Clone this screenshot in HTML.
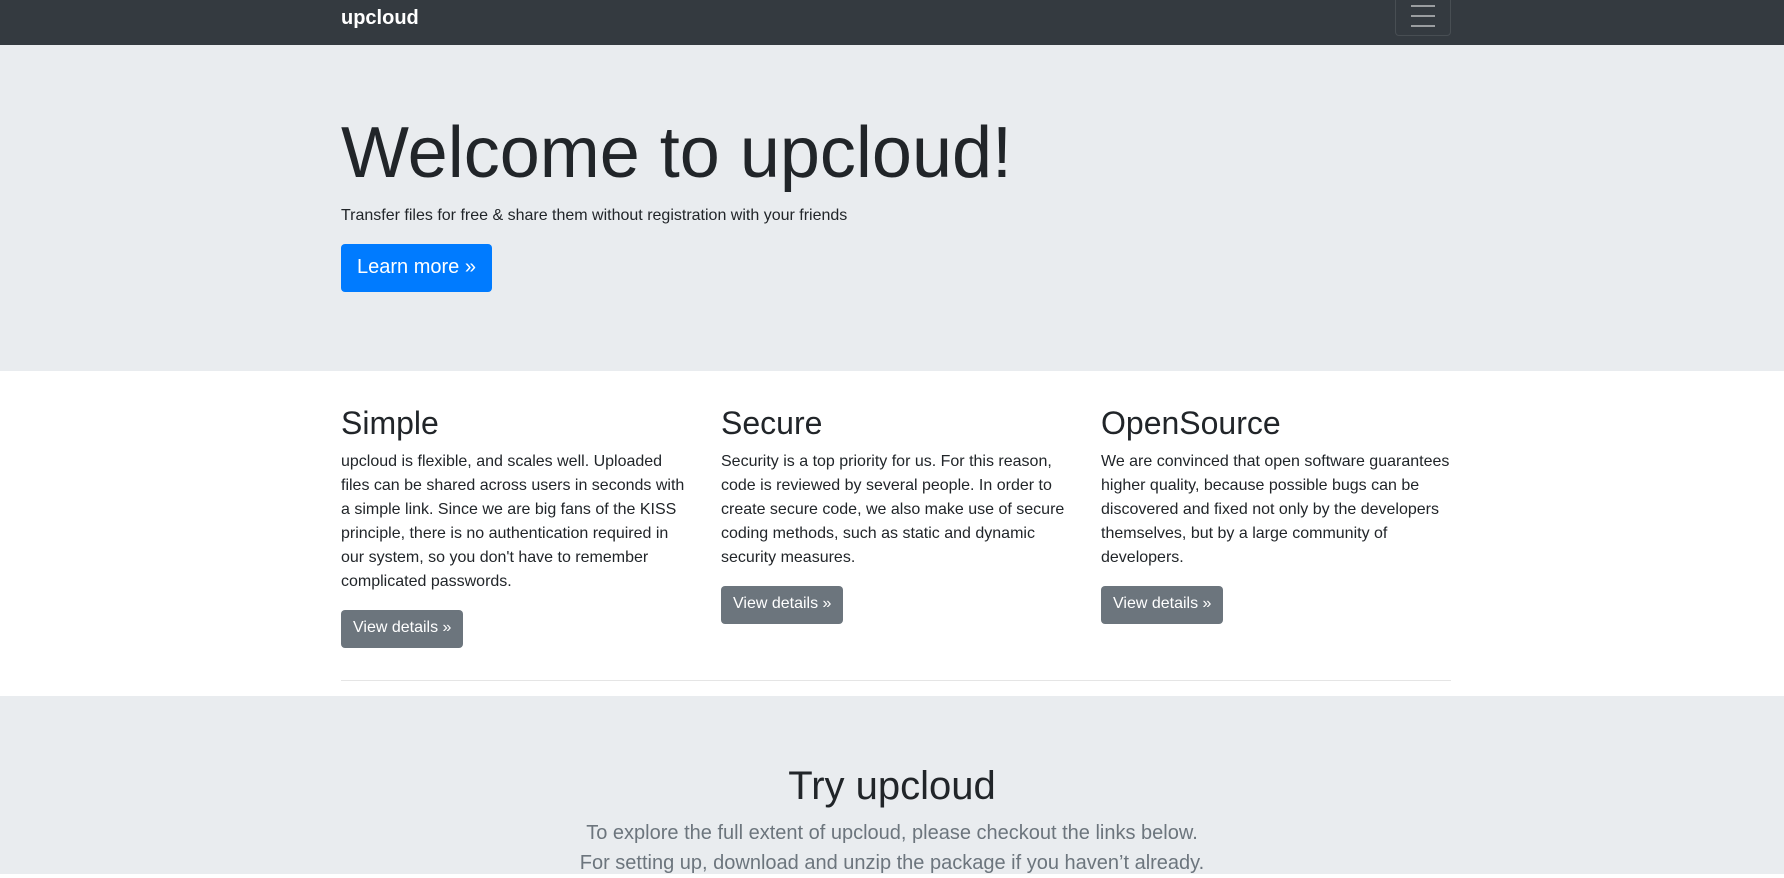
<!DOCTYPE html>
<html><head><meta charset="utf-8"><style>
*{box-sizing:border-box;margin:0;padding:0}
body{width:1784px;height:874px;overflow:hidden;font-family:"Liberation Sans",Arial,sans-serif;color:#212529;font-size:16px;line-height:1.5;background:#fff}
.nav{height:45px;background:#343a40;position:relative}
.c{width:1110px;margin-left:341px;position:relative}
.brand{position:absolute;left:0;top:5px;color:#fff;font-weight:bold;font-size:20px;line-height:26px}
.tog{position:absolute;right:0;top:-4px;width:56px;height:40px;border:1px solid rgba(255,255,255,.1);border-radius:4px}
.tog i{position:absolute;left:15px;width:24px;height:2px;background:rgba(255,255,255,.5)}
.jumbo{background:#e9ecef;height:326px;padding-top:65px}
h1{font-size:72px;font-weight:300;line-height:86px;margin-bottom:8px}
.jumbo p{margin-bottom:16px}
.btnp{display:inline-block;background:#007bff;color:#fff;font-size:20px;line-height:30px;padding:8px 16px;border-radius:4px;height:48px}
.row{display:flex;margin-top:33px}
.col{width:380px;padding-right:30px}
.col:last-child{width:350px;padding-right:0}
h2{font-size:32px;font-weight:500;line-height:38px;margin-bottom:8px}
.col p{margin-bottom:16px}
.btns{display:inline-block;background:#6c757d;color:#fff;padding:6px 12px;border-radius:4px;line-height:24px;height:38px}
hr{border:0;border-top:1px solid rgba(0,0,0,.1);margin-top:32px}
.try{position:absolute;top:696px;left:0;width:1784px;height:178px;background:#e9ecef;text-align:center;padding-top:66px}
.try h3{font-size:40px;font-weight:500;line-height:48px;margin-bottom:8px}
.try p{font-size:20px;line-height:30px;color:#6c757d;font-weight:300}
</style></head><body>
<div class="nav"><div class="c"><span class="brand">upcloud</span><div class="tog"><i style="top:8px"></i><i style="top:18px"></i><i style="top:28px"></i></div></div></div>
<div class="jumbo"><div class="c">
<h1>Welcome to upcloud!</h1>
<p>Transfer files for free &amp; share them without registration with your friends</p>
<span class="btnp">Learn more »</span>
</div></div>
<div class="c">
<div class="row">
<div class="col"><h2>Simple</h2><p>upcloud is flexible, and scales well. Uploaded files can be shared across users in seconds with a simple link. Since we are big fans of the KISS principle, there is no authentication required in our system, so you don't have to remember complicated passwords.</p><span class="btns">View details »</span></div>
<div class="col"><h2>Secure</h2><p>Security is a top priority for us. For this reason, code is reviewed by several people. In order to create secure code, we also make use of secure coding methods, such as static and dynamic security measures.</p><span class="btns">View details »</span></div>
<div class="col"><h2>OpenSource</h2><p>We are convinced that open software guarantees higher quality, because possible bugs can be discovered and fixed not only by the developers themselves, but by a large community of developers.</p><span class="btns">View details »</span></div>
</div>
<hr>
</div>
<div class="try"><h3>Try upcloud</h3><p>To explore the full extent of upcloud, please checkout the links below.</p><p>For setting up, download and unzip the package if you haven’t already.</p></div>
</body></html>
